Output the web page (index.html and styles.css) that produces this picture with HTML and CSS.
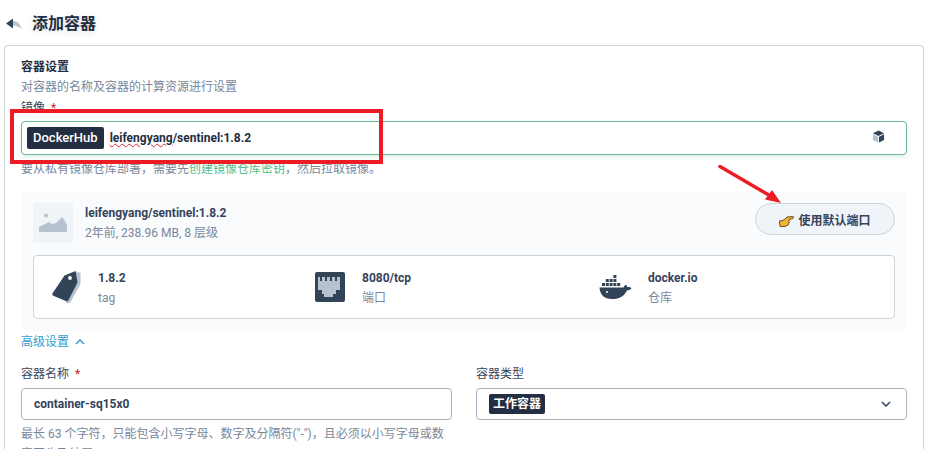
FILE: index.html
```html
<!DOCTYPE html>
<html lang="zh-CN">
<head>
  <meta charset="UTF-8" />
  <title>添加容器</title>
  <link rel="stylesheet" href="styles.css">
</head>
<body>
  <div class="page">

    <!-- Header -->
    <header class="header">
      <svg class="back-icon" viewBox="0 0 16 12">
        <path class="ic-light" d="M7 3c4 0 7.500 2.500 8.500 8.500C13.500 8.500 10.500 7.500 7 7.500z"/>
        <path class="ic-dark" d="M7 0.500L0 5.500l7 5z"/>
      </svg>
      <h1 class="title">添加容器</h1>
    </header>

    <section class="card">
      <div class="card-title">容器设置</div>
      <div class="card-desc">对容器的名称及容器的计算资源进行设置</div>

      <!-- Image field -->
      <label class="image-label">镜像<span class="req">*</span></label>
      <div class="image-input">
        <span class="tag-hub">DockerHub</span>
        <span class="image-text"><span class="typo">leifengyang</span>/sentinel:1.8.2</span>
        <svg class="cube-icon" viewBox="0 0 14 14">
          <path class="ic-dark" d="M7 0.500l6 3-6 3-6-3z"/>
          <path class="ic-light" d="M1 4.500l5.500 2.800v6.200L1 10.700z"/>
          <path class="ic-dark" d="M13 4.500L7.500 7.300v6.200L13 10.700z"/>
        </svg>
      </div>
      <div class="hint">要从私有镜像仓库部署&#65292;需要先<span class="link">创建镜像仓库密钥</span>&#65292;然后拉取镜像。</div>

      <!-- Image info panel -->
      <div class="panel">
        <div class="panel-head">
          <div class="thumb">
            <svg class="thumb-icon" viewBox="0 0 28 22">
              <circle cx="7" cy="3.500" r="2"/>
              <path d="M0 20v-5l4-2 6-3 3 2 4-1 6-6 3 4 2 4v7z"/>
            </svg>
          </div>
          <div class="head-text">
            <div class="item-name">leifengyang/sentinel:1.8.2</div>
            <div class="item-sub">2年前, 238.96 MB, 8 层级</div>
          </div>
          <button class="port-btn">
            <svg class="hand-icon" viewBox="0 0 15 11">
              <path d="M.5 5L5 4l3-3 6-.5c.7 0 .7 1.800 0 2L10 3.500V7L9 9 6 10.500H1z"/>
            </svg>
            使用默认端口
          </button>
        </div>

        <div class="info-box">
          <div class="info-item">
            <svg class="info-icon" viewBox="0 0 30 34">
              <path class="ic-light" d="M25 1.500l4.500 1.500v11L19.500 32c-.8 1.300-2.500 1.600-4.500 1z"/>
              <path class="ic-dark" d="M13.500 5.500L24.500 1l2 11.500-9 17.500c-.6 1.200-1.700 1.500-2.800.9L2.300 25.800c-1-.6-1.200-1.500-.7-2.500z"/>
              <circle cx="19" cy="8" r="1.900" fill="#fff"/>
            </svg>
            <div class="info-text">
              <div class="item-name">1.8.2</div>
              <div class="item-sub">tag</div>
            </div>
          </div>
          <div class="info-item">
            <svg class="info-icon" viewBox="0 0 30 30">
              <rect class="ic-dark" width="30" height="30" rx="2"/>
              <path class="ic-light" d="M3 5h2v4h2V5h3v4h2V5h3v4h2V5h3v4h2V5h3v13h-4v4h-3v3h-9v-3H7v-4H3z"/>
            </svg>
            <div class="info-text">
              <div class="item-name">8080/tcp</div>
              <div class="item-sub">端口</div>
            </div>
          </div>
          <div class="info-item">
            <svg class="whale-icon" viewBox="0 0 33 24">
              <g class="ic-dark">
                <path d="M0.500 12.500h24c.5-2 2-2.500 3-2.500l.8 2.200c1.500-.4 3.300 0 4.200 1-1.200 1.800-3 2.200-4.500 2.200C25.500 20.500 21 24 13 24 5 24 1 19.500 .5 12.500z"/>
                <rect x="3" y="8" width="3" height="3"/>
                <rect x="6.800" y="8" width="3" height="3"/>
                <rect x="10.600" y="8" width="3" height="3"/>
                <rect x="14.400" y="8" width="3" height="3"/>
                <rect x="18.200" y="8" width="3" height="3"/>
                <rect x="6.800" y="4" width="3" height="3"/>
                <rect x="10.600" y="4" width="3" height="3"/>
                <rect x="14.400" y="4" width="3" height="3"/>
                <rect x="14.400" y="0" width="3" height="3"/>
              </g>
              <circle cx="8" cy="17" r="1" fill="#fff"/>
            </svg>
            <div class="info-text">
              <div class="item-name">docker.io</div>
              <div class="item-sub">仓库</div>
            </div>
          </div>
        </div>
      </div>

      <!-- Advanced settings -->
      <div class="advanced">
        高级设置
        <svg class="adv-chevron" viewBox="0 0 10 6"><path d="M1 5l4-4 4 4"/></svg>
      </div>

      <div class="form-grid">
        <div>
          <label class="field-label">容器名称<span class="req">*</span></label>
          <div class="field-input">container-sq15x0</div>
          <div class="hint">最长 63 个字符&#65292;只能包含小写字母、数字及分隔符("-")&#65292;且必须以小写字母或数字开头及结尾</div>
        </div>
        <div>
          <label class="field-label">容器类型</label>
          <div class="field-input field-select">
            <span class="tag-type">工作容器</span>
            <svg class="sel-chevron" viewBox="0 0 10 6"><path d="M1 1l4 4 4-4"/></svg>
          </div>
        </div>
      </div>
    </section>

    <!-- Red annotations over the screenshot -->
    <svg class="marks" viewBox="0 0 934 449">
      <rect class="mark-box" x="12" y="111" width="369" height="51"/>
      <path class="mark-line" d="M720 166.500L774 198"/>
      <path class="mark-head" d="M781 203L765 199.500 772 190z"/>
    </svg>
  </div>
</body>
</html>
```

FILE: styles.css
```css
* {
  box-sizing: border-box;
}

html, body {
  margin: 0;
  height: 449px;
  overflow: hidden;
  background: #fff;
}

body {
  font-family: Roboto, "Noto Sans CJK SC", sans-serif;
  font-size: 12px;
  line-height: 20px;
  color: #36435c;
}

.page {
  position: relative;
  width: 934px;
  height: 449px;
  padding: 0 10px 0 4px;
}

.ic-dark {
  fill: #324558;
}

.ic-light {
  fill: #b6c2cf;
}

/* header */
.header {
  display: flex;
  align-items: center;
  height: 45px;
  padding: 3px 0 0 2px;
}

.back-icon {
  width: 16px;
  height: 12px;
  margin-right: 10px;
}

.title {
  margin: 0;
  font-size: 16px;
  font-weight: 700;
  line-height: 24px;
  color: #242e42;
  text-shadow: 0 2px 6px rgba(36, 46, 66, 0.12);
}

/* card */
.card {
  height: 420px;
  padding: 11px 16px 0;
  border: 1px solid #ccd3db;
  border-radius: 4px;
}

.card-title {
  font-weight: 700;
  color: #242e42;
}

.card-desc {
  color: #79879c;
}

.image-label {
  display: block;
  margin-top: 1px;
  color: #36435c;
}

.req {
  margin-left: 6px;
  color: #ca2621;
}

.image-input {
  display: flex;
  align-items: center;
  height: 34px;
  margin-top: 3px;
  padding: 0 21px 0 5px;
  border: 1px solid #6cb795;
  border-radius: 4px;
  box-shadow: 0 2px 4px rgba(85, 188, 138, 0.2);
}

.tag-hub {
  height: 22px;
  padding: 0 6px;
  background: #242e42;
  border-radius: 2px;
  color: #fff;
  font-size: 13px;
  font-weight: 500;
  line-height: 22px;
}

.image-text {
  flex: 1;
  margin-left: 6px;
  font-weight: 700;
  color: #242e42;
}

.typo {
  text-decoration: underline wavy #e0262b 1px;
}

.cube-icon {
  width: 13px;
  height: 13px;
  margin-top: -3px;
}

.hint {
  margin-top: 4px;
  color: #79879c;
}

.link {
  color: #55bc8a;
}

/* image info */
.panel {
  margin-top: 12px;
  padding: 12px;
  background: #f9fbfd;
}

.panel-head {
  display: flex;
  align-items: center;
  height: 40px;
}

.thumb {
  display: flex;
  align-items: center;
  justify-content: center;
  width: 40px;
  height: 40px;
  background: #eff4f9;
}

.thumb-icon {
  width: 28px;
  height: 22px;
  fill: #b6c2cf;
}

.head-text {
  flex: 1;
  margin-left: 12px;
}

.item-name {
  font-weight: 700;
  color: #36435c;
}

.item-sub {
  color: #79879c;
}

.port-btn {
  display: flex;
  align-items: center;
  justify-content: center;
  width: 140px;
  height: 32px;
  margin-top: -8px;
  padding: 0;
  background: #eff4f9;
  border: 1px solid #ccd3db;
  border-radius: 16px;
  color: #36435c;
  font: 700 12px Roboto, "Noto Sans CJK SC", sans-serif;
  cursor: pointer;
}

.hand-icon {
  width: 15px;
  height: 11px;
  margin: 4px 4px 0 0;
  fill: #f5b32e;
  stroke: #54451f;
  stroke-width: 0.900;
}

.info-box {
  display: grid;
  grid-template-columns: 264px 284px auto;
  align-items: center;
  height: 64px;
  margin-top: 12px;
  padding-left: 17px;
  background: #fff;
  border: 1px solid #ccd3db;
  border-radius: 4px;
}

.info-item {
  display: flex;
  align-items: center;
}

.info-text {
  padding-top: 2px;
}

.info-icon {
  width: 30px;
  height: 34px;
  margin-right: 17px;
}

.whale-icon {
  width: 33px;
  height: 24px;
  margin-right: 16px;
}

.advanced {
  display: flex;
  align-items: center;
  height: 20px;
  padding-top: 2px;
  color: #329dce;
}

.adv-chevron {
  width: 10px;
  height: 6px;
  margin-left: 6px;
  fill: none;
  stroke: #329dce;
  stroke-width: 1.500;
}

/* form */
.form-grid {
  display: grid;
  grid-template-columns: 431px 431px;
  column-gap: 24px;
  margin-top: 13px;
}

.field-label {
  display: block;
  color: #36435c;
}

.field-input {
  height: 32px;
  margin-top: 4px;
  padding: 0 12px;
  border: 1px solid #abb4c1;
  border-radius: 4px;
  font-weight: 700;
  line-height: 30px;
  color: #36435c;
}

.field-select {
  display: flex;
  align-items: center;
  justify-content: space-between;
}

.tag-type {
  padding: 0 4px;
  background: #242e42;
  border-radius: 2px;
  color: #fff;
  line-height: 20px;
}

.sel-chevron {
  width: 10px;
  height: 6px;
  margin-right: 3px;
  fill: none;
  stroke: #36435c;
  stroke-width: 1.500;
}

/* annotations */
.marks {
  position: absolute;
  top: 0;
  left: 0;
  width: 934px;
  height: 449px;
  pointer-events: none;
}

.mark-box {
  fill: none;
  stroke: #ec1c24;
  stroke-width: 4;
}

.mark-line {
  fill: none;
  stroke: #ec1c24;
  stroke-width: 3.500;
  stroke-linecap: round;
}

.mark-head {
  fill: #ec1c24;
}
```
